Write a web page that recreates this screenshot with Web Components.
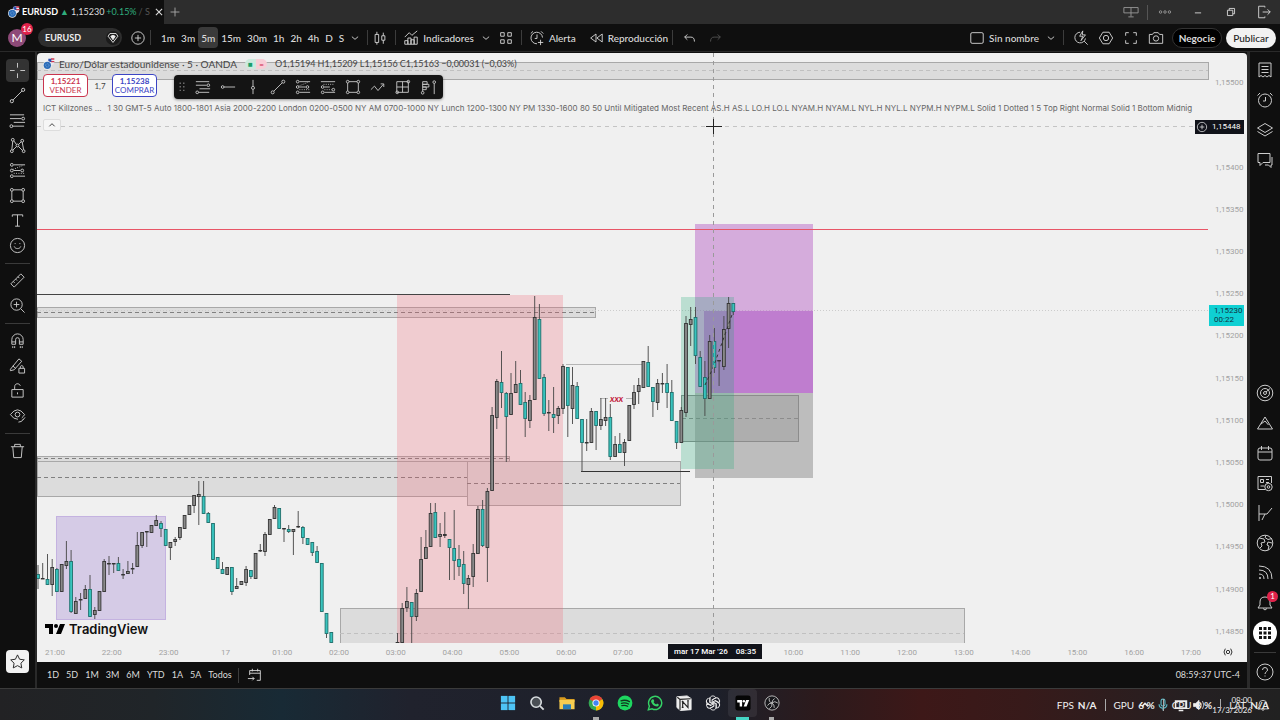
<!DOCTYPE html>
<html lang="es">
<head>
<meta charset="utf-8">
<title>EURUSD 1,15230</title>
<style>
    body {
        margin: 0;
        background: #0f0f0f;
        color: #dbdbdb;
        font: 10px/12px Lato, "Open Sans", sans-serif;
    }
</style>
</head>
<body>
<trading-app></trading-app>

<script>
const ICONS = {
    cross: '<path d="M9 1v5M9 12v5M1 9h5M12 9h5"/>',
    trend: '<circle cx="3" cy="15" r="1.7"/><circle cx="15" cy="3" r="1.7"/><path d="M4.3 13.7 13.7 4.3"/>',
    fib: '<path d="M1 3h15M1 7h12M5 11h12M4 15h12"/><circle cx="15" cy="7" r="1.5"/><circle cx="2.5" cy="15" r="1.5"/>',
    pattern: '<circle cx="3" cy="15" r="1.5"/><circle cx="4" cy="3" r="1.5"/><circle cx="9" cy="9" r="1.5"/><circle cx="14" cy="4" r="1.5"/><circle cx="15.5" cy="15" r="1.5"/><path d="M3 13.5 4 4.5M5 4l3 4M10 8l3-3M14 5.5l1.5 8M4 14l4-4M10 10l4 4"/>',
    forecast: '<circle cx="3" cy="3" r="1.5"/><circle cx="3" cy="9" r="1.5"/><circle cx="3" cy="15" r="1.5"/><circle cx="14" cy="9" r="1.5"/><path d="M5 3h12M5 9h7M5 15h12"/><path stroke-dasharray="1 1.5" d="m4 8 10-4M5 12h11"/>',
    position: '<circle cx="3" cy="9" r="1.5"/><circle cx="3" cy="15" r="1.5"/><circle cx="15" cy="12" r="1.5"/><path d="M1 3h16M5 9h6M5 15h12"/><path stroke-dasharray="1 1.5" d="M4 6h12M5 12h8"/>',
    rect: '<path d="M4.5 3h9M4.5 15h9M3 4.5v9M15 4.5v9"/><circle cx="3" cy="3" r="1.5"/><circle cx="15" cy="3" r="1.5"/><circle cx="3" cy="15" r="1.5"/><circle cx="15" cy="15" r="1.5"/>',
    text: '<path d="M3.5 5V3h11v2M9 3v12M6.5 15h5"/>',
    smile: '<circle cx="9" cy="9" r="7.5"/><path d="M5.5 10c1 3 6 3 7 0M6.5 6.5v1M11.5 6.5v1"/>',
    ruler: '<path d="m2 12.5 10.5-10.5 3.5 3.5L5.5 16zM4.5 10l1.5 1.5M7 7.5 8.5 9M9.5 5 11 6.5"/>',
    zoom: '<circle cx="8" cy="8" r="6"/><path d="M8 5v6M5 8h6M12.5 12.5l4 4"/>',
    magnet: '<path d="M3 13V8a6 6 0 0 1 12 0v5h-4V8a2 2 0 0 0-4 0v5zM3 10.5h4M11 10.5h4M4 15v2M6 15v2M12 15v2M14 15v2"/>',
    penlock: '<path d="m1.5 13 9-11 3 2.5-8 9-4 1zM4 9.5l3 2.5M10.5 12h6v5h-6zM12 12v-2q1.5-2 3 0v2"/>',
    lock: '<path d="M3 8h12v8H3zM6 8V5c0-4 5-4 6-1M9 11v2"/>',
    eye: '<path d="M1.5 8q7.5-10 15 0-1 2-3 3.5M1.5 8q3 5 8 5"/><circle cx="9" cy="8" r="2.5"/><path d="M10 16q4 0 5-3M14.5 14l2.5-3"/>',
    trash: '<path d="M2 5h14M6 5V2.5h6V5M4 5l1 11.5h8L14 5"/>',
    star: '<path d="m9 2 2.2 4.6 5 .7-3.6 3.5.9 5L9 13.4l-4.5 2.4.9-5L1.8 7.3l5-.7z"/>',
    plus: '<path d="M9 4v10M4 9h10"/>',
    close: '<path d="m5 5 8 8M13 5l-8 8" stroke-width="1.4"/>',
    pluscircle: '<circle cx="9" cy="9" r="7"/><path d="M9 5.5v7M5.5 9h7"/>',
    gem: '<circle cx="9" cy="9" r="8" fill="#1b1b1b" stroke="none"/><path d="m3.5 7 2-3h7l2 3L9 14z"/><path fill="currentColor" d="m6.5 7 2.5-1 2.5 1L9 11z"/>',
    down: '<path d="m5.5 7.5 3.5 3 3.5-3"/>',
    up: '<path stroke-width="1.5" d="m5 11 4-4 4 4"/>',
    candles: '<path d="M3.5 5h4v9h-4zM5.5 2v3M5.5 14v2.5M11 6.5h3.5v5H11zM12.7 3v3.5M12.7 11.5v4"/>',
    indicators: '<path d="M2 16v-4h3.5v4zM5.5 16v-7H9v7zM9 16v-5h3.5v5zM12.5 16V8H16v8zM2 8l5-5 3 3 6-5"/>',
    tiles: '<path d="M3 3h4v4H3zM11 3h4v4h-4zM3 11h4v4H3zM11 11h4v4h-4z"/>',
    alarm: '<path d="M15.2 8.5A6.5 6.5 0 1 0 9 15.5M9 5v4.5H6.5M2 4l2.5-2.5M13.5 1.5 16 4M13 11v6M10 14h6"/>',
    replay: '<path d="M9 4.5v9L3 9zM16 4.5v9L10 9z"/>',
    undo: '<path d="M6 5 3 8l3 3M3 8h7q4 0 4 5"/>',
    redo: '<path d="m12 5 3 3-3 3M15 8H8q-4 0-4 5"/>',
    square: '<rect x="2" y="3" width="14" height="12" rx="1.5"/>',
    flash: '<path d="M8 2.5a6 6 0 1 0 6 7M12.5 12.5l4 4M11 1 7.5 7H11l-2 5 5-6.5h-3.5z"/>',
    hexagon: '<path d="M5.5 2.5h7l4 6.5-4 6.5h-7L1.5 9z"/><circle cx="9" cy="9" r="3"/>',
    full: '<path d="M3 6.5V3h3.5M11.5 3H15v3.5M15 11.5V15h-3.5M6.5 15H3v-3.5"/>',
    camera: '<path d="M1.5 5H5l1.5-2h5L13 5h3.5v10h-15z"/><circle cx="9" cy="9.5" r="3"/>',
    monitor: '<path d="M1 4h16v6H1zM9 4v10M6 14.5h6"/>',
    dots: '<circle cx="4" cy="9" r="1.4"/><circle cx="9" cy="9" r="1.4"/><circle cx="14" cy="9" r="1.4"/>',
    minus: '<path d="M5.5 10h7"/>',
    restore: '<path d="M5 7h6v6H5zM7 7V5h6v6h-2"/>',
    exit: '<path d="M10 4V2.5H3v13h7V14M7.5 9H16M13 6l3 3-3 3"/>',
    hline: '<circle cx="3" cy="9" r="1.5"/><path d="M4.5 9H17"/>',
    vline: '<circle cx="9" cy="10" r="1.7"/><path d="M9 1v7M9 12v5"/>',
    path: '<path d="m1 12 4-4 4 5 6-7M12 5.5h3.5v3.5"/>',
    table: '<path d="M2 3h13v12H2zM8.5 3v12M2 9h13"/><circle cx="2.5" cy="15" r="1.5"/><circle cx="15" cy="3" r="1.5"/>',
    profile: '<path d="M3 3v11M3 3h5v3H3M3 6h7v3H3M3 9h4v3H3M16 5v12"/><circle cx="3" cy="15.5" r="1.5"/><circle cx="16" cy="3.5" r="1.5"/>',
    grip: '<path stroke-dasharray="1.5 2.5" stroke-width="1.5" d="M7 4v11M11 4v11"/>',
    list: '<path d="M3 2h12v14l-2-1.5-2 1.5-2-1.5L7 16l-2-1.5L3 16zM5.5 5.5h7M5.5 8.5h7M5.5 11.5h7"/>',
    clock: '<circle cx="9" cy="9.5" r="6.5"/><path d="M9.5 6v4H7M1.5 4.5 4 2M14 2l2.5 2.5"/>',
    layers: '<path d="m9 2.5 7.5 4.5L9 11.5 1.5 7zM1.5 10.5 9 15l7.5-4.5"/>',
    chat: '<path d="M2 2.5h12v9H7l-3 3v-3H2zM16 6v8h-1v2.5L12.5 14H9"/>',
    radar: '<circle cx="9" cy="9" r="7.8"/><circle cx="9" cy="9" r="4.5"/><circle cx="9" cy="9" r="1.5"/><path d="m10 8 4-3.5"/>',
    peak: '<path d="M1.5 15 9 3l7.5 12zM5 10l4-3 3.5 4"/>',
    calendar: '<rect x="2" y="4" width="14" height="12" rx="2"/><path d="M2 8h14M5.5 2v4M12.5 2v4"/>',
    news: '<path d="M9 15.5H2v-13h13.5V9M4.5 5.5h3v3h-3zM10 5.5h3M10 8.5h3M4.5 12h4"/><circle cx="12.5" cy="13" r="3.7"/><circle cx="12.5" cy="13" r="1.3"/>',
    options: '<path d="M3 1v16M3 10h8l5-6M6 16l3-6"/>',
    globe: '<circle cx="9" cy="9" r="7.8"/><path d="M3 4l5 1 1 3-4 1 1 3-2 2M10 1.5l-1 2 3 2 4-1M16 9l-4-1-1 3 2 1-1 4"/>',
    feed: '<circle cx="4" cy="14" r=".7"/><path d="M3 10q5 0 5 5M3 6q9 0 9 9M3 2q13 0 13 13"/>',
    bell: '<path d="M2 14h14l-2-3V8q0-5-5-5T4 8v3zM7 14.5q2 3 4 0"/>',
    apps: '<g fill="currentColor" stroke="none"><path d="M3 3h3v3H3zM7.5 3h3v3h-3zM12 3h3v3h-3zM3 7.5h3v3H3zM7.5 7.5h3v3h-3zM12 7.5h3v3h-3zM3 12h3v3H3zM7.5 12h3v3h-3zM12 12h3v3h-3z"/></g>',
    help: '<circle cx="9" cy="9" r="8"/><path d="M6.5 7q0-2.5 2.5-2.5T11.5 7q0 1-1.2 1.8T9 11M9 12.5v1"/>',
    goto: '<path d="M3 9V4h12v11h-4M3 7h12M6 2v3M12 2v3M1 13h7M6 11l2 2-2 2"/>',
    gear: '<path stroke-width="1.5" d="M5 4Q1 9 5 14M13 4q4 5 0 10"/><circle cx="9" cy="9" r="2.5" stroke-width="1.5"/>',
    pair: '<g stroke="none"><circle cx="12" cy="5.5" r="5" fill="#e8e8f0"/><path d="M12 .5h5v2h-5zM12 4.5h5v2h-5z" fill="#d33a4e"/><path d="M8 1h4.5v5H8z" fill="#2d4fb0"/><circle cx="6.5" cy="11" r="6.5" fill="#f0f0f0"/><circle cx="6.5" cy="11" r="5.5" fill="#2b6cb8"/></g><circle cx="6.5" cy="11" r="2.5" stroke="#9bc3e8" stroke-dasharray="1 1"/>',
    windows: '<g stroke="none" fill="#4ec4f5"><path d="M1 1h7.5v7.5H1z"/><path d="M9.5 1H17v7.5H9.5z"/><path d="M1 9.5h7.5V17H1z"/><path d="M9.5 9.5H17V17H9.5z"/></g>',
    search: '<circle cx="8" cy="8" r="5.8" stroke="#d8dde0" stroke-width="1.8" fill="#4a4f55"/><path d="m12.5 12.5 4 4" stroke="#d8dde0" stroke-width="2"/>',
    folder: '<g stroke="none"><path d="M.5 2.5h6l2 2h9V8H.5z" fill="#d79a1e"/><path d="M.5 5.5h17V16H.5z" fill="#f7ce51"/><path d="M4.5 10.5h9V16h-9z" fill="#2a7fb8"/></g>',
    chrome: '<g stroke="none"><circle cx="9" cy="9" r="8.3" fill="#34a853"/><path d="M9 9 1.8 4.8a8.3 8.3 0 0 1 14.4 0z" fill="#ea4335"/><path d="M9 9l7.2-4.2A8.3 8.3 0 0 1 9 17.3z" fill="#fbbc05"/><circle cx="9" cy="9" r="4" fill="#fff"/><circle cx="9" cy="9" r="3" fill="#4285f4"/></g>',
    spotify: '<circle cx="9" cy="9" r="8.3" fill="#1ed760" stroke="none"/><path stroke="#10351d" stroke-width="1.5" stroke-linecap="round" d="M4.5 6.5q5-1.5 9.5 1M5 9.3q4-1.2 8 .8M5.5 12q3.5-1 6.5.7"/>',
    whatsapp: '<path stroke="#35d366" stroke-width="1.6" d="m1.5 16.5 1.2-4A7.4 7.4 0 1 1 5.8 15.5z"/><path fill="#35d366" stroke="none" d="M6 4.8 7.5 5l.7 2-.9 1q1 2 3 2.8l1-1.2 2 1q0 2.2-2 2.4-5.5-.5-6.8-6Q5 5.5 6 4.8z"/>',
    notion: '<path fill="#eee" stroke="#eee" d="M1 2 12.5 1 17 4v12.5L5 17.5 1 14z"/><path stroke="#222" stroke-width="1.3" d="m1.5 2.5 3 2.5 12-.8M4.5 5v12M7.5 14V7.5L13.5 14V6.5M6.5 7.5h2M6.5 14h2M12.5 6.5h2"/>',
    openai: `<g stroke="#e8e8e8" stroke-width="1.1">${[0, 60, 120, 180, 240, 300].map(a => `<path transform="rotate(${a} 9 9)" d="M5.5 8.5V4.5C5.5.5 10.5 0 12.2 3L8 5.5V10"/>`).join('')}</g>`,
    tradingview: '<rect x=".5" y=".5" width="17" height="17" rx="2.5" fill="#050505" stroke="none"/><g fill="#fff" stroke="none"><path d="M2.5 5.5h5.5v7.5H5.3V8.3H2.5z"/><circle cx="10" cy="6.9" r="1.4"/><path d="M12.5 5.5H16L13 13H9.8z"/></g>',
    obs: '<circle cx="9" cy="9" r="8" fill="#17171b" stroke="#c8c8c8"/><path stroke="#c8c8c8" d="M9 9Q5 8 6 3.5M9 9q3-3 6.5 0M9 9q1 4-3 6.5M9 9q-4 0-5 3M9 9q0-3.5 3-5M9 9q3 2 2.5 5.5"/>',
    mic: '<path d="M6.5 3.5q0-2 2.5-2t2.5 2v5q0 2-2.5 2t-2.5-2zM9 13v3M4 8q0 5 5 5t5-5" stroke="#59b7c4" stroke-width="1.5"/>',
    screen: '<path stroke-width="2" d="M2 4h14v9H2zM6 16h6"/>',
    speaker: '<path fill="currentColor" d="M2 7h3l4-4v12l-4-4H2z"/><path d="M11 6q2 3 0 6M13.5 4q3.5 5 0 10"/>',
    tray: '<path stroke-width="2" d="m5 11 4-4 4 4"/>',
    bolt: '<circle cx="9" cy="9" r="8" fill="#f4eaf7" stroke="#7b1f8f" stroke-width="1.3"/><path stroke="#7b1f8f" stroke-width="1.3" d="M10.5 5 7 9h4l-3.5 4"/>'
};

class TvIcon extends HTMLElement {
    connectedCallback() {
        this.attachShadow({ mode: 'open' }).innerHTML = `
            <style>
                :host { display: inline-flex; flex: none; width: var(--icon, 16px); height: var(--icon, 16px); }
                svg { width: 100%; height: 100%; display: block; }
            </style>
            <svg viewBox="0 0 18 18" fill="none" stroke="currentColor" stroke-width="1" aria-hidden="true">${ICONS[this.getAttribute('name')]}</svg>
        `;
    }
}
customElements.define('tv-icon', TvIcon);

// A button with an optional icon; its caption goes in the slot.
class TvButton extends HTMLElement {
    connectedCallback() {
        const icon = this.getAttribute('icon');
        const label = this.getAttribute('label');
        this.attachShadow({ mode: 'open' }).innerHTML = `
            <style>
                :host { display: block; flex: none; }
                button {
                    display: flex;
                    align-items: center;
                    justify-content: center;
                    gap: 4px;
                    width: 100%;
                    height: 100%;
                    padding: var(--pad, 0);
                    border: var(--edge, 0);
                    border-radius: var(--round, 4px);
                    background: var(--fill, none);
                    color: inherit;
                    font: inherit;
                    white-space: nowrap;
                    cursor: pointer;
                }
            </style>
            <button type="button" ${label ? `aria-label="${label}"` : ''}>
                ${icon ? `<tv-icon name="${icon}"></tv-icon>` : ''}<slot></slot>
            </button>
        `;
    }
}
customElements.define('tv-button', TvButton);

class TabStrip extends HTMLElement {
    connectedCallback() {
        this.attachShadow({ mode: 'open' }).innerHTML = `
            <style>
                :host { display: flex; height: 24px; background: #2d2d2d; align-items: center; }
                .tab {
                    display: flex; align-items: center; gap: 2px; box-sizing: border-box; flex: none;
                    width: 164px; height: 24px; padding: 0 3px 0 8px; background: #0f0f0f;
                    font-size: 9px; white-space: nowrap;
                }
                .tab tv-icon { --icon: 12px; }
                .tab tv-button { --icon: 14px; margin-left: auto; }
                b { color: #fff; }
                i { font-style: normal; color: #2fae7e; }
                .dim { color: #555; }
                .add { --icon: 16px; width: 22px; color: #aaa; }
                .window { display: flex; margin-left: auto; align-items: center; }
                .window tv-button { width: 33px; --icon: 16px; }
                .grey { color: #999; }
                hr { width: 1px; height: 15px; border: 0; margin: 0; background: #555; }
            </style>
            <div class="tab">
                <tv-icon name="pair"></tv-icon>
                <b>EURUSD</b><i>▲</i><span>1,15230</span><i>+0.15%</i><span class="dim">/ S</span>
                <tv-button icon="close" label="Cerrar"></tv-button>
            </div>
            <tv-button class="add" icon="plus" label="Nueva pestaña"></tv-button>
            <div class="window">
                <tv-button class="grey" icon="monitor" label="Monitores"></tv-button>
                <hr>
                <tv-button class="grey" icon="dots" label="Menú"></tv-button>
                <tv-button icon="minus" label="Minimizar"></tv-button>
                <tv-button icon="restore" label="Restaurar"></tv-button>
                <tv-button icon="exit" label="Salir"></tv-button>
            </div>
        `;
    }
}
customElements.define('tab-strip', TabStrip);

class TopToolbar extends HTMLElement {
    connectedCallback() {
        const intervals = ['1m', '3m', '5m', '15m', '30m', '1h', '2h', '4h', 'D', 'S'];
        this.attachShadow({ mode: 'open' }).innerHTML = `
            <style>
                :host {
                    display: flex; align-items: center; height: 28px; box-sizing: border-box;
                    padding: 0 4px 0 8px; border-bottom: 1px solid #2a2a2a; font-weight: 500;
                }
                .avatar {
                    position: relative; width: 18px; height: 18px; border-radius: 50%;
                    background: #8e4a78; color: #fff; font: 12px/18px Lato, sans-serif; text-align: center;
                }
                .avatar span {
                    position: absolute; left: 13px; top: -6px; width: 12px; border-radius: 6px;
                    background: #e0224a; font-size: 8px; line-height: 12px;
                }
                .symbol {
                    display: flex; align-items: center; justify-content: space-between; box-sizing: border-box;
                    width: 84px; height: 19px; margin: 0 8px 0 12px; padding: 0 1px 0 7px;
                    border: 0; border-radius: 10px; background: #2e2e2e; color: #eee; font: bold 9px/12px Lato, sans-serif;
                }
                hr { width: 1px; height: 15px; border: 0; margin: 0 7px; background: #3c3c3c; flex: none; }
                .intervals { display: flex; margin-left: 3px; }
                .intervals tv-button { --pad: 0 3px; height: 21px; }
                .on { --fill: #3a3a3a; }
                .wide { width: 25px; }
                .faint { color: #555; }
                .tight { margin-left: 4px; margin-right: 4px; }
                .pill { width: 50px; height: 20px; margin-left: 4px; --round: 10px; }
                .trade { --fill: #000; --edge: 1px solid #333; font-weight: bold; }
                .publish { --fill: #f2f2f2; color: #222; }
                .right { display: flex; align-items: center; margin-left: auto; }
                .gap { margin-left: 4px; }
                .far { margin-left: 12px; }
            </style>
            <div class="avatar">M<span>16</span></div>
            <button class="symbol" type="button">EURUSD<tv-icon name="gem"></tv-icon></button>
            <tv-button icon="pluscircle" label="Comparar"></tv-button>
            <hr class="tight">
            <div class="intervals">
                ${intervals.map(i => `<tv-button class="${i === '5m' ? 'on' : ''}">${i}</tv-button>`).join('')}
            </div>
            <tv-button icon="down" label="Intervalos"></tv-button>
            <hr class="tight">
            <tv-button icon="candles" label="Velas"></tv-button>
            <hr>
            <tv-button icon="indicators">Indicadores</tv-button>
            <tv-button class="gap" icon="down" label="Plantillas"></tv-button>
            <tv-button class="gap" icon="tiles" label="Diseños"></tv-button>
            <hr>
            <tv-button icon="alarm">Alerta</tv-button>
            <tv-button class="far" icon="replay">Reproducción</tv-button>
            <hr class="tight">
            <tv-button class="wide" icon="undo" label="Deshacer"></tv-button>
            <tv-button class="wide faint" icon="redo" label="Rehacer"></tv-button>
            <div class="right">
                <tv-button icon="square">Sin nombre</tv-button>
                <tv-button class="gap" icon="down" label="Gestionar"></tv-button>
                <hr class="tight">
                <tv-button class="wide" icon="flash" label="Búsqueda rápida"></tv-button>
                <tv-button class="wide" icon="hexagon" label="Configuración"></tv-button>
                <tv-button class="wide" icon="full" label="Pantalla completa"></tv-button>
                <tv-button class="wide" icon="camera" label="Captura"></tv-button>
                <tv-button class="pill trade">Negocie</tv-button>
                <tv-button class="pill publish">Publicar</tv-button>
            </div>
        `;
    }
}
customElements.define('top-toolbar', TopToolbar);

class DrawingRail extends HTMLElement {
    connectedCallback() {
        const groups = [
            ['cross', 'trend', 'fib', 'pattern', 'forecast', 'rect', 'text', 'smile'],
            ['ruler', 'zoom'],
            ['magnet', 'penlock', 'lock', 'eye'],
            ['trash']
        ];
        this.attachShadow({ mode: 'open' }).innerHTML = `
            <style>
                :host {
                    display: flex; flex-direction: column; align-items: center; box-sizing: border-box;
                    width: 37px; padding: 6px 0 14px; border-right: 2px solid #2a2a2a;
                }
                tv-button { width: 23px; height: 23px; margin: 1px 0; --icon: 17px; color: #ccc; }
                .on { --fill: #333; }
                hr { width: 25px; height: 1px; margin: 5px 0 4px; border: 0; background: #3a3a3a; }
                .star { margin-top: auto; color: #222; --fill: #f2f2f2; }
            </style>
            ${groups.map(g => g.map(n => `<tv-button icon="${n}" label="${n}" class="${n === 'cross' ? 'on' : ''}"></tv-button>`).join('')).join('<hr>')}
            <tv-button class="star" icon="star" label="Favoritos"></tv-button>
        `;
    }
}
customElements.define('drawing-rail', DrawingRail);

class WidgetRail extends HTMLElement {
    connectedCallback() {
        const button = n => `<tv-button icon="${n}" label="${n}"></tv-button>`;
        this.attachShadow({ mode: 'open' }).innerHTML = `
            <style>
                :host {
                    display: flex; flex-direction: column; align-items: center; box-sizing: border-box;
                    width: 33px; padding: 3px 0 1px; border-left: 3px solid #2a2a2a;
                }
                tv-button { width: 24px; height: 24px; margin: 3px 0; --icon: 18px; color: #ccc; }
                .low { margin-top: auto; display: flex; flex-direction: column; align-items: center; }
                .bell { position: relative; }
                .bell span {
                    position: absolute; right: -1px; top: 3px; width: 11px; border-radius: 6px;
                    background: #e0224a; color: #fff; font-size: 8px; line-height: 11px; text-align: center;
                }
                .apps { --fill: #fff; --round: 50%; color: #111; }
                hr { width: 22px; height: 1px; margin: 4px 0; border: 0; background: #3a3a3a; }
            </style>
            ${['list', 'clock', 'layers', 'chat'].map(button).join('')}
            <div class="low">
                ${['radar', 'peak', 'calendar', 'news', 'options', 'globe', 'feed'].map(button).join('')}
                <div class="bell">${button('bell')}<span>1</span></div>
                <tv-button class="apps" icon="apps" label="Aplicaciones"></tv-button>
                <hr>
                ${button('help')}
            </div>
        `;
    }
}
customElements.define('widget-rail', WidgetRail);

// kind high top bottom low, one candle per step; "-" leaves the step empty
const CANDLES = `t565 574 579 589|d563 578 579 579|t554 579 585 585|g559 567 585 596|t568 569 592 592|g564 564 592 592|g541 561 566 569|t550 561 612 613|g597 601 614 614|d593 599 600 610|g585 589 599 599|t575 589 617 617
g607 610 615 619|g591 591 611 611|g559 561 592 592|d556 563 564 575|d563 563 564 573|t557 563 571 571|d569 574 575 579|g561 571 574 574|d563 568 569 574|g532 545 567 567|g532 532 546 548|d531 531 532 547
g525 525 533 533|g515 520 526 526|t521 523 529 537|t529 529 546 546|g542 542 548 560|g537 539 542 546|g527 527 538 540|g515 515 529 529|g505 505 515 515|g495 495 506 513|g481 494 497 525|t481 496 514 514
t512 513 523 523|t523 523 560 560|t557 557 569 569|t562 569 574 574|g567 567 575 575|t567 567 592 595|g578 586 589 589|g581 581 585 585|g566 569 583 586|t570 570 577 579|g553 553 579 579|d544 550 551 552
g532 534 552 556|g519 519 535 535|g505 507 519 519|t508 508 529 529|d528 528 529 542|t525 529 532 533|g529 529 532 555|d511 526 527 528|t526 527 538 544|t538 538 545 545|t542 542 553 556|t546 551 563 563
t563 563 612 612|t613 613 634 638|t632 632 643 643|-|-|-|-|-|-|-|-|-|-|-|-|-
d633 642 643 643|g603 608 643 643|g587 601 608 612|t602 602 617 643|g589 593 617 621|g537 559 592 592|g530 547 559 559|g503 513 547 547|t503 512 538 538|g523 534 537 547|d512 534 536 538|t539 539 548 580
t510 548 561 580|t545 559 567 576|t551 564 584 594|g575 578 585 609|g544 553 577 587|g506 509 554 554|t500 509 546 547|g488 491 548 582|g407 415 491 491|g379 381 418 429|t351 382 393 408|t392 393 417 462
g373 393 415 415|g361 384 393 393|t370 383 405 405|t392 402 419 437|g395 400 421 428|g296 317 400 400|t304 319 379 379|t374 377 414 416|d400 412 413 431|t387 414 418 433|g406 408 416 424|g364 366 409 414
t367 367 406 437|g367 385 409 424|t382 386 419 419|t419 419 443 472|d419 442 443 451|g408 411 443 443|t411 411 426 450|g398 419 426 430|g398 417 421 426|t404 417 457 460|g436 444 457 457|t433 444 453 453
g439 442 453 466|g405 405 441 441|g385 392 405 409|g378 385 392 404|g361 361 388 388|t346 362 387 387|t387 387 402 417|g379 383 403 410|d373 383 384 393|t364 383 393 408|t380 392 421 421|t421 421 443 449
g407 410 443 443|g316 323 413 417|g307 319 325 346|t307 317 356 364|t351 357 387 387|t361 377 399 416|g335 341 399 399|t328 341 368 373|d360 360 361 386|g316 329 367 370|g297 303 329 348|t303 303 312 315`;

class CandlePlot extends HTMLElement {
    connectedCallback() {
        const candles = CANDLES.split(/[|\n]/).map((row, i) => {
            if (row === '-') return '';
            const [high, top, bottom, low] = row.slice(1).split(' ').map(Number);
            const x = 38 + i * 4.73;
            const body = Math.max(bottom - top - 1, .5);
            const fill = row[0] === 't' ? '#38c4be' : row[0] === 'g' ? '#8a8a8a' : '#222';
            return `<path d="M${x.toFixed(1)} ${high}V${low}" stroke="#444" stroke-width=".9"/>
                <rect x="${(x - 1.4).toFixed(1)}" y="${top}.5" width="2.8" height="${body}" fill="${fill}" stroke="${row[0] === 't' ? '#1f6f6c' : '#333'}" stroke-width=".9"/>`;
        }).join('');
        // supply and demand zones: left, top, right, bottom, midline
        const zones = [[37, 62, 1208, 79, 70], [37, 307, 595, 317, 312], [37, 456, 509, 461, 458],
            [37, 461, 467, 496, 477], [467, 461, 680, 505, 483], [340, 608, 964, 650, 633]];
        this.attachShadow({ mode: 'open' }).innerHTML = `
            <style>
                :host { display: block; flex: 1; min-height: 0; overflow: hidden; }
                svg { display: block; width: 100%; height: 100%; }
                text { font: italic bold 9px Lato, sans-serif; fill: #c2183a; }
            </style>
            <svg viewBox="37 53 1172 590" preserveAspectRatio="xMinYMin slice" fill="none">
                ${zones.map(([l, t, r, b, m]) => `
                    <rect x="${l}.5" y="${t}.5" width="${r - l}" height="${b - t}" fill="#dcdcdc" stroke="#a8a8a8"/>
                    <path d="M${l} ${m}.5H${r}" stroke="${m === 70 || m === 633 ? '#c0c0c0' : '#808080'}" stroke-dasharray="4 3"/>`).join('')}
                <path d="M37 294.5H510" stroke="#444"/>
                <path d="M37 310.5H1209" stroke="#ccc" stroke-dasharray="1 2"/>
                <path d="M566 364.5H643M600 398.5H635" stroke="#b5b5b5"/>
                <path d="M581 471.5H690" stroke="#333"/>
                <rect x="56.5" y="516.5" width="109" height="103" fill="#9c7bd0" fill-opacity=".32" stroke="#c4b2e0"/>
                <rect x="397" y="295" width="166" height="348" fill="#f0606e" fill-opacity=".25"/>
                <rect x="695" y="393" width="118" height="85" fill="#bdbdbd"/>
                <rect x="681.5" y="395.5" width="117" height="46" fill="#999" fill-opacity=".4" stroke="#8c8c8c"/>
                <path d="M682 418.5H799" stroke="#8c8c8c" stroke-dasharray="4 3"/>
                <rect x="695" y="224" width="118" height="169" fill="#ba68c8" fill-opacity=".5"/>
                <rect x="704" y="311" width="109" height="82" fill="#a33bbd" fill-opacity=".42"/>
                <rect x="681" y="297" width="53" height="172" fill="#22ab78" fill-opacity=".26"/>
                <rect x="37" y="229" width="1171" height="1" fill="#e85566"/>
                ${candles}
                <path d="M705 385 713 368 733 312" stroke="#333" stroke-dasharray="3 3"/>
                <rect x="608" y="394" width="18" height="9" fill="#f0f0f0"/>
                <text x="610" y="402">xxx</text>
                <path d="M713.5 53V643" stroke="#9a9a9a" stroke-dasharray="4 4"/>
                <path d="M37 126.5H1195" stroke="#c4c4c4" stroke-dasharray="4 4"/>
                <path d="M713.5 119V134M706 126.5H722" stroke="#222"/>
                <svg x="725" y="627" width="16" height="16" viewBox="0 0 18 18">${ICONS.bolt}</svg>
            </svg>
        `;
    }
}
customElements.define('candle-plot', CandlePlot);

class ChartPane extends HTMLElement {
    connectedCallback() {
        const prices = ['1,15500', '', '1,15400', '1,15350', '1,15300', '1,15250', '1,15200', '1,15150',
            '1,15100', '1,15050', '1,15000', '1,14950', '1,14900', '1,14850'];
        const hours = ['21:00', '22:00', '23:00', '17', '01:00', '02:00', '03:00', '04:00', '05:00', '06:00', '07:00',
            '', '', '10:00', '11:00', '12:00', '13:00', '14:00', '15:00', '16:00', '17:00'];
        const favourites = ['grip', 'fib', 'hline', 'vline', 'trend', 'forecast', 'position', 'rect', 'path', 'table', 'profile'];
        this.attachShadow({ mode: 'open' }).innerHTML = `
            <style>
                :host {
                    display: flex; flex: 1; min-width: 0; position: relative; background: #f0f0f0; color: #444;
                    border-radius: 4px 4px 0 0; overflow: hidden;
                }
                .plot { display: flex; flex-direction: column; flex: 1; min-width: 0; }
                .hours { display: flex; justify-content: space-between; height: 19px; align-items: center; }
                .hours span { width: 36px; text-align: center; }
                .hours, .prices, .when { font-family: Roboto, sans-serif; font-size: 8px; color: #a2a2a2; }
                .prices { position: relative; box-sizing: border-box; width: 38px; padding: 9px 0; display: grid; grid-auto-rows: 1fr; }
                .prices span { align-self: center; padding-left: 6px; }
                .now, .cursor { position: absolute; left: 0; width: 35px; }
                .prices .now { top: 252px; box-sizing: border-box; height: 21px; padding: 1px 5px; background: #0fd0d3; color: #134; line-height: 9px; }
                .prices .cursor { top: 67px; left: -14px; display: flex; align-items: center; gap: 4px; box-sizing: border-box; width: 49px; height: 14px; padding: 0 2px 0 1px; background: #11131a; color: #fff; }
                .prices tv-icon { --icon: 12px; }
                .gear { position: absolute; right: 13px; bottom: 4px; color: #333; }
                .head { position: absolute; left: 6px; top: 5px; display: grid; gap: 4px; }
                .row { display: flex; align-items: center; white-space: nowrap; }
                .title { gap: 4px; height: 12px; }
                .title tv-icon { --icon: 12px; }
                .state { display: flex; margin: 0 4px; border-radius: 6px; overflow: hidden; font: bold 8px/10px Lato, sans-serif; }
                .state span { width: 11px; text-align: center; background: #cdeade; color: #1b9f6c; }
                .state span + span { background: #f8cdd6; color: #d02850; }
                .values { display: flex; gap: 2px; font-size: 9px; }
                .deal { gap: 5px; font-size: 8px; }
                .deal tv-button { width: 45px; height: 23px; --fill: #fff; --edge: 1px solid currentColor; line-height: 9px; }
                .deal tv-button span, .deal b { display: block; }
                .deal i { width: 14px; font-style: normal; text-align: center; }
                .sell { color: #c9354e; }
                .buy { color: #3c45c4; }
                .study { gap: 6px; height: 14px; font: 8px/12px Inter, sans-serif; color: #666; }
                .fold { width: 18px; height: 12px; --fill: #f6f6f6; --edge: 1px solid #ddd; --round: 2px; --icon: 12px; }
                .favs {
                    position: absolute; left: 137px; top: 22px; display: flex; align-items: center; height: 24px; padding-right: 3px;
                    border-radius: 4px; background: #141414; color: #ccc; box-shadow: 0 1px 3px #0006;
                }
                .favs tv-button { width: 25px; --icon: 16px; }
                .favs tv-button:first-child { width: 16px; color: #777; }
                .brand { position: absolute; left: 8px; bottom: 25px; display: flex; align-items: center; gap: 4px; color: #111; font: 600 13px/16px Inter, sans-serif; }
                .when { position: absolute; left: 631px; bottom: 3px; display: flex; gap: 8px; padding: 0 6px; background: #11131a; color: #fff; font-weight: 500; line-height: 15px; white-space: nowrap; }
            </style>
            <div class="plot">
                <candle-plot></candle-plot>
                <div class="hours">${hours.map(h => `<span>${h}</span>`).join('')}</div>
            </div>
            <div class="prices">
                ${prices.map(p => `<span>${p}</span>`).join('')}
                <div class="now">1,15230<br>00:22</div>
                <div class="cursor"><tv-icon name="pluscircle"></tv-icon>1,15448</div>
                <tv-icon class="gear" name="gear"></tv-icon>
            </div>
            <div class="head">
                <div class="row title">
                    <tv-icon name="pair"></tv-icon>
                    <div>Euro/Dólar estadounidense · 5 · OANDA</div>
                    <div class="state"><span>■</span><span>=</span></div>
                    <div class="values"><span>O1,15194</span><span>H1,15209</span><span>L1,15156</span><span>C1,15163</span><span>−0,00031</span><span>(−0,03%)</span></div>
                </div>
                <div class="row deal">
                    <tv-button class="sell"><span><b>1,15221</b>VENDER</span></tv-button>
                    <i>1,7</i>
                    <tv-button class="buy"><span><b>1,15238</b>COMPRAR</span></tv-button>
                </div>
                <div class="row study">
                    <span>ICT Killzones ...</span>
                    <span>1 30 GMT-5 Auto 1800-1801 Asia 2000-2200 London 0200-0500 NY AM 0700-1000 NY Lunch 1200-1300 NY PM 1330-1600 80 50 Until Mitigated Most Recent AS.H AS.L LO.H LO.L NYAM.H NYAM.L NYL.H NYL.L NYPM.H NYPM.L Solid 1 Dotted 1 5 Top Right Normal Solid 1 Bottom Midnig</span>
                </div>
                <tv-button class="fold" icon="up" label="Ocultar leyenda"></tv-button>
            </div>
            <div class="favs">${favourites.map(f => `<tv-button icon="${f}" label="${f}"></tv-button>`).join('')}</div>
            <div class="brand">
                <svg width="20" height="10" viewBox="0 0 20 10"><path d="M0 0h8v10H4V4H0z"/><circle cx="11" cy="2" r="2"/><path d="M15 0h5l-4 10h-5z"/></svg>
                TradingView
            </div>
            <div class="when"><span>mar 17 Mar '26</span><span>08:35</span></div>
        `;
    }
}
customElements.define('chart-pane', ChartPane);

class RangeBar extends HTMLElement {
    connectedCallback() {
        const ranges = ['1D', '5D', '1M', '3M', '6M', 'YTD', '1A', '5A', 'Todos'];
        this.attachShadow({ mode: 'open' }).innerHTML = `
            <style>
                :host { display: flex; align-items: center; height: 26px; padding: 0 7px; background: #0f0f0f; font-size: 9px; }
                .ranges { display: flex; gap: 1px; }
                .ranges tv-button { --pad: 0 3px; }
                hr { width: 1px; height: 15px; border: 0; margin: 0 8px 0 3px; background: #3c3c3c; }
                time { margin-left: auto; }
            </style>
            <div class="ranges">${ranges.map(r => `<tv-button>${r}</tv-button>`).join('')}</div>
            <hr>
            <tv-button icon="goto" label="Ir a"></tv-button>
            <time>08:59:37 UTC-4</time>
        `;
    }
}
customElements.define('range-bar', RangeBar);

class TaskBar extends HTMLElement {
    connectedCallback() {
        const apps = ['windows', 'search', 'folder', 'chrome', 'spotify', 'whatsapp', 'notion', 'openai', 'tradingview', 'obs'];
        this.attachShadow({ mode: 'open' }).innerHTML = `
            <style>
                :host {
                    display: grid; grid-template-columns: 1fr 293px 1fr; align-items: center; height: 32px; box-sizing: border-box;
                    border-top: 1px solid #3b3b3b; color: #eee;
                    background: linear-gradient(90deg, #222224, #202529 12%, #182a35 22%, #20222d 32%, #1d202a 56%, #2c1a1c 64%, #3d1818 72%, #371a1a 80%, #242022 94%, #212121);
                }
                .apps { grid-column: 2; display: grid; grid-template-columns: repeat(10, 1fr); height: 31px; }
                .apps tv-button { --icon: 16px; border-bottom: 3px solid transparent; height: 28px; }
                .apps .open { border-image: linear-gradient(90deg, transparent 42%, #aaa 42% 58%, transparent 58%) 3; }
                .apps .on { --fill: #ffffff12; border-image: linear-gradient(90deg, transparent 32%, #45d6c5 32% 68%, transparent 68%) 3; }
                .side { position: relative; height: 31px; }
                .tray, .meters { position: absolute; top: 0; height: 31px; display: flex; align-items: center; white-space: nowrap; }
                .tray { right: 10px; gap: 4px; --icon: 14px; font-size: 8px; line-height: 10px; text-align: right; }
                .tray time { width: 42px; }
                .meters { right: 11px; gap: 4px; font-size: 10px; }
                .meters hr { width: 1px; height: 12px; border: 0; margin: 0 4px; background: #aaa; }
            </style>
            <nav class="apps">
                ${apps.map(a => `<tv-button icon="${a}" label="${a}" class="${a === 'tradingview' ? 'on' : a === 'chrome' || a === 'obs' ? 'open' : ''}"></tv-button>`).join('')}
            </nav>
            <div class="side">
                <div class="tray">
                    <tv-icon name="tray"></tv-icon><tv-icon name="mic"></tv-icon><tv-icon name="screen"></tv-icon><tv-icon name="speaker"></tv-icon>
                    <time>08:00<br>17/3/2026</time>
                    <tv-icon name="bell"></tv-icon>
                </div>
                <div class="meters">
                    <span>FPS</span><b>N/A</b><hr><span>GPU</span><b>6 %</b><hr><span>CPU</span><b>3 %</b><hr><span>LAT</span><b>N/A</b>
                </div>
            </div>
        `;
    }
}
customElements.define('task-bar', TaskBar);

class TradingApp extends HTMLElement {
    connectedCallback() {
        this.attachShadow({ mode: 'open' }).innerHTML = `
            <style>
                :host { display: flex; flex-direction: column; min-height: 100vh; }
                main { display: flex; flex: 1; }
                section { display: flex; flex-direction: column; flex: 1; min-width: 0; padding-top: 1px; }
            </style>
            <tab-strip></tab-strip>
            <top-toolbar></top-toolbar>
            <main>
                <drawing-rail></drawing-rail>
                <section>
                    <chart-pane></chart-pane>
                    <range-bar></range-bar>
                </section>
                <widget-rail></widget-rail>
            </main>
            <task-bar></task-bar>
        `;
    }
}
customElements.define('trading-app', TradingApp);
</script>
</body>
</html>
